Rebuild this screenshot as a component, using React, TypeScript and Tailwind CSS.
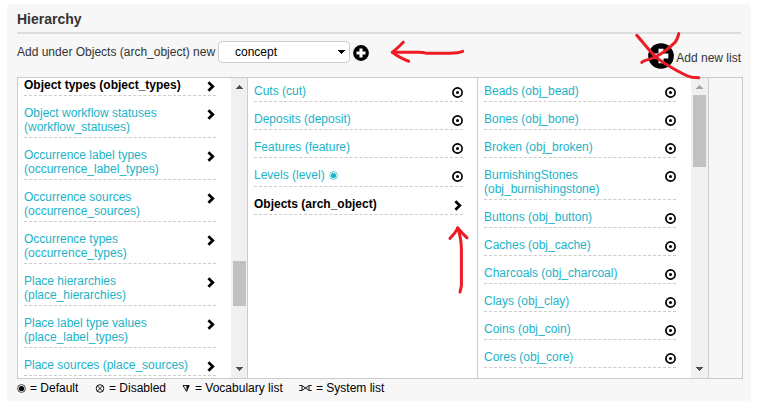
import React from "react";

type Kind = "arrow" | "dot";
type Item = { lines: string[]; active?: boolean; kind?: Kind; marked?: boolean };

const objectLists: Item[] = [
  { lines: ["Object types (object_types)"], active: true },
  { lines: ["Object workflow statuses", "(workflow_statuses)"] },
  { lines: ["Occurrence label types", "(occurrence_label_types)"] },
  { lines: ["Occurrence sources", "(occurrence_sources)"] },
  { lines: ["Occurrence types", "(occurrence_types)"] },
  { lines: ["Place hierarchies", "(place_hierarchies)"] },
  { lines: ["Place label type values", "(place_label_types)"] },
  { lines: ["Place sources (place_sources)"] },
];

const objectTypes: Item[] = [
  { lines: ["Cuts (cut)"], kind: "dot" },
  { lines: ["Deposits (deposit)"], kind: "dot" },
  { lines: ["Features (feature)"], kind: "dot" },
  { lines: ["Levels (level)"], kind: "dot", marked: true },
  { lines: ["Objects (arch_object)"], active: true },
];

const archObjects: Item[] = [
  { lines: ["Beads (obj_bead)"], kind: "dot" },
  { lines: ["Bones (obj_bone)"], kind: "dot" },
  { lines: ["Broken (obj_broken)"], kind: "dot" },
  { lines: ["BurnishingStones", "(obj_burnishingstone)"], kind: "dot" },
  { lines: ["Buttons (obj_button)"], kind: "dot" },
  { lines: ["Caches (obj_cache)"], kind: "dot" },
  { lines: ["Charcoals (obj_charcoal)"], kind: "dot" },
  { lines: ["Clays (obj_clay)"], kind: "dot" },
  { lines: ["Coins (obj_coin)"], kind: "dot" },
  { lines: ["Cores (obj_core)"], kind: "dot" },
];

function Chevron() {
  return (
    <svg width="11" height="11" viewBox="0 0 11 11" className="shrink-0">
      <path d="M3.4 1.2 L7.8 5.5 L3.4 9.8" fill="none" stroke="#000" strokeWidth="2.7" />
    </svg>
  );
}

function DotCircle() {
  return (
    <svg width="11" height="11" viewBox="0 0 11 11" className="shrink-0">
      <circle cx="5.5" cy="5.5" r="4.6" fill="none" stroke="#000" strokeWidth="1.7" />
      <circle cx="5.5" cy="5.5" r="1.5" fill="#000" />
    </svg>
  );
}

function Fisheye({ color }: { color: string }) {
  return (
    <svg width="9" height="9" viewBox="0 0 9 9" className="shrink-0">
      <circle cx="4.5" cy="4.5" r="3.9" fill="none" stroke={color} strokeWidth="0.7" />
      <circle cx="4.5" cy="4.5" r="2.6" fill={color} />
    </svg>
  );
}

function PlusCircle({ size }: { size: number }) {
  return (
    <svg width={size} height={size} viewBox="0 0 16 16" className="shrink-0">
      <circle cx="8" cy="8" r="7.9" fill="#000" />
      <path d="M8 3.5V12.5M3.5 8H12.5" stroke="#fff" strokeWidth="3.1" />
    </svg>
  );
}

function Row({ item }: { item: Item }) {
  return (
    <div
      className={
        "flex shrink-0 items-start justify-between border-b border-dashed border-[#ccc] pt-[10px] " +
        (item.marked ? "pb-[4px] " : "pb-[3px] ") +
        (item.active ? "font-bold text-black" : "text-[#1ab3c8]")
      }
    >
      <div className="whitespace-nowrap">
        {item.lines.map((line) => (
          <div key={line} className="flex h-[14px] items-center gap-[4px]">
            <span>{line}</span>
            {item.marked && <Fisheye color="#1ab3c8" />}
          </div>
        ))}
      </div>
      <div className="pt-[3px]">{item.kind === "dot" ? <DotCircle /> : <Chevron />}</div>
    </div>
  );
}

function Triangle({ down, color }: { down?: boolean; color: string }) {
  return (
    <svg width="7" height="4" viewBox="0 0 7 4" shapeRendering="crispEdges">
      <path d={down ? "M0 0H7L3.5 4Z" : "M0 4H7L3.5 0Z"} fill={color} />
    </svg>
  );
}

function Scrollbar({ track, thumb, upColor }: { track: string; thumb: string; upColor: string }) {
  return (
    <div className={"flex shrink-0 flex-col justify-between bg-[#f0f0f0] " + track}>
      <div className="flex h-[17px] items-center pl-[5px] pt-[1px]">
        <Triangle color={upColor} />
      </div>
      <div className="flex w-full flex-1 pl-[2px]">
        <div className={"w-[13px] bg-[#c1c1c1] " + thumb} />
      </div>
      <div className="flex h-[17px] items-center pb-[2px] pl-[5px]">
        <Triangle down color="#505050" />
      </div>
    </div>
  );
}

function Annotations() {
  return (
    <svg
      className="pointer-events-none absolute left-0 top-0"
      width="761"
      height="418"
      viewBox="0 0 761 418"
      fill="none"
      stroke="#ed1c24"
      strokeWidth="3"
      strokeLinecap="round"
      strokeLinejoin="round"
    >
      <path d="M462.7 51.4C459 53 455 53.2 450 53.2H426C424 52.3 422 52.2 418 52.2H392.5" />
      <path d="M403.3 42.2C400 45.5 396 49.5 392.3 52.3C396 55 402 59 408.7 61.2" />
      <path d="M460 292L461.4 286V250C461.4 243 461 237 457.7 228" />
      <path d="M450 238.4C453 235.5 456 232 457.7 228C461 231.5 464 235.5 467 237.8" />
      <path d="M636.8 35.4C643 42 648 49.5 655 56C660 61 667 65 674 69C681 72.8 687 76.5 692 77.2L698.8 77.7" />
      <path d="M678.8 33.6C677.5 38 677 40.5 674.5 42.8C669 48 664 52.5 657 56C652 59 645 59.5 641.8 62.4" />
    </svg>
  );
}

export default function App() {
  return (
    <div className="relative h-[418px] w-[761px] overflow-hidden bg-white pl-[7px] pt-[4px] font-['Liberation_Sans',Arial,sans-serif] text-[12px] leading-[14px] text-[#333]">
      <section className="flex h-[397px] w-[744px] flex-col rounded-[4px] bg-[#f7f7f7] px-[10px]">
        <h1 className="h-[30px] w-[724px] border-b-2 border-[#ddd] pt-[7px] text-[14px] font-bold leading-[16px]">
          Hierarchy
        </h1>

        <div className="flex h-[43px] w-[724px] items-start">
          <span className="w-[201px] shrink-0 whitespace-nowrap pt-[11px]">
            Add under Objects (arch_object) new
          </span>
          <div className="mt-[7px] flex h-[22px] w-[132px] items-center justify-between rounded-[4px] border border-[#ccc] bg-white pl-[16px] pr-[4px] text-black">
            <span>concept</span>
            <svg width="7" height="4" viewBox="0 0 7 4" shapeRendering="crispEdges">
              <path d="M0 0H7L3.5 4Z" fill="#000" />
            </svg>
          </div>
          <div className="ml-[3px] mt-[11px]">
            <PlusCircle size={16} />
          </div>
          <div className="ml-auto flex items-start gap-[2px] pt-[9px]">
            <PlusCircle size={26} />
            <span className="pt-[8px]">Add new list</span>
          </div>
        </div>

        <div className="flex h-[302px] w-[726px] shrink-0 border border-[#ccc]">
          <div className="flex w-[230px] justify-between overflow-hidden border-r border-[#ccc] bg-white">
            <div className="ml-[6px] mt-[-10px] flex w-[192px] flex-col">
              {objectLists.map((item) => (
                <Row key={item.lines[0]} item={item} />
              ))}
            </div>
            <Scrollbar track="w-[16px]" thumb="mt-[166px] h-[45px]" upColor="#505050" />
          </div>
          <div className="w-[230px] overflow-hidden border-r border-[#ccc] bg-white">
            <div className="ml-[6px] mt-[-4px] flex w-[209px] flex-col">
              {objectTypes.map((item) => (
                <Row key={item.lines[0]} item={item} />
              ))}
            </div>
          </div>
          <div className="flex w-[231px] justify-between overflow-hidden border-r border-[#ccc] bg-white">
            <div className="ml-[6px] mt-[-4px] flex w-[192px] flex-col">
              {archObjects.map((item) => (
                <Row key={item.lines[0]} item={item} />
              ))}
            </div>
            <Scrollbar track="w-[17px]" thumb="h-[72px]" upColor="#a3a3a3" />
          </div>
        </div>

        <footer className="flex h-[18px] items-center whitespace-nowrap text-black">
          <div className="flex w-[78px] items-center gap-[4px]">
            <Fisheye color="#000" />
            <span>= Default</span>
          </div>
          <div className="flex w-[87px] items-center gap-[4px]">
            <svg width="10" height="9" viewBox="0 0 10 9">
              <circle cx="5" cy="4.5" r="3.8" fill="none" stroke="#000" strokeWidth="0.9" />
              <path d="M2.3 1.8L7.7 7.2M7.7 1.8L2.3 7.2" stroke="#000" strokeWidth="0.9" />
            </svg>
            <span>= Disabled</span>
          </div>
          <div className="flex w-[117px] items-center gap-[5px]">
            <svg width="8" height="7" viewBox="0 0 8 7">
              <path d="M1 0.6H7.2L4.6 6.4Z" fill="none" stroke="#000" strokeWidth="0.9" />
              <path d="M4.4 0.6H7.2L4.6 6.4Z" fill="#000" />
            </svg>
            <span>= Vocabulary list</span>
          </div>
          <div className="flex items-center gap-[4px]">
            <svg width="13" height="8" viewBox="0 0 13 8">
              <path
                d="M0.3 1.5H2.8L10.2 6.5H12.7M0.3 6.5H2.8L10.2 1.5H12.7M3 1.5V6.5M10 1.5V6.5"
                fill="none"
                stroke="#000"
                strokeWidth="0.9"
              />
            </svg>
            <span>= System list</span>
          </div>
        </footer>
      </section>
      <Annotations />
    </div>
  );
}
